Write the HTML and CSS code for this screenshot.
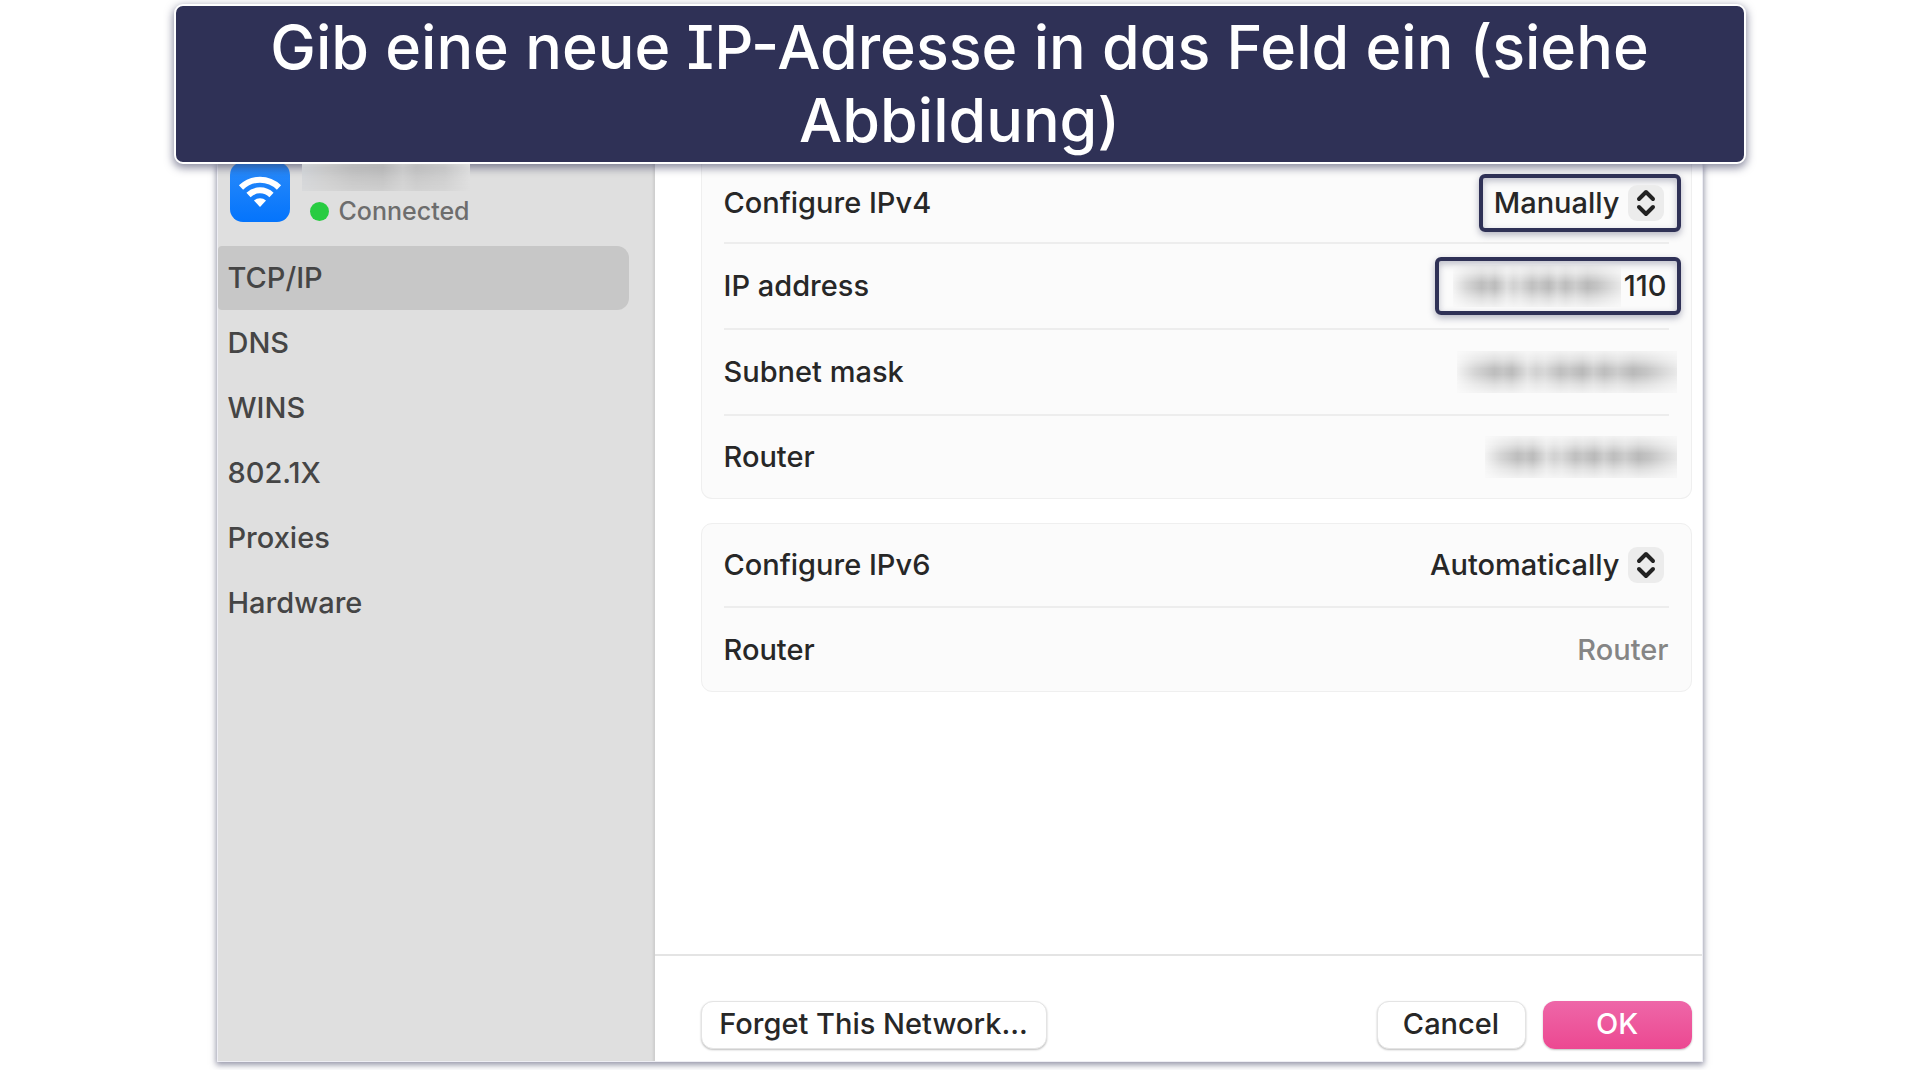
FILE: index.html
```html
<!DOCTYPE html>
<html lang="de">
<head>
  <meta charset="UTF-8">
  <meta name="viewport" content="width=device-width, initial-scale=1">
  <title>IP-Adresse</title>
  <link rel="stylesheet" href="styles.css">
</head>
<body>
  <h1 class="banner">Gib eine neue IP-Adresse in das Feld ein (siehe Abbildung)</h1>

  <div class="window" lang="en">
    <aside class="sidebar">
      <div class="network">
        <svg class="wifi" viewBox="0 0 60 60" aria-hidden="true">
          <defs>
            <linearGradient id="blue" x1="0" y1="0" x2="0" y2="1">
              <stop offset="0" stop-color="#2a8bfa"/>
              <stop offset="1" stop-color="#0474fc"/>
            </linearGradient>
          </defs>
          <rect width="60" height="60" rx="13" fill="url(#blue)"/>
          <g fill="none" stroke="#fff" stroke-width="6">
            <path d="M11 25.500a27 27 0 0 1 38 0"/>
            <path d="M18.500 33a16.500 16.500 0 0 1 23 0"/>
          </g>
          <path d="M24 38.500a9 9 0 0 1 12 0L30 45z" fill="#fff"/>
        </svg>
        <div>
          <div class="redacted name"></div>
          <div class="status"><span class="dot"></span>Connected</div>
        </div>
      </div>
      <nav>
        <a href="#tcpip" class="active">TCP/IP</a>
        <a href="#dns">DNS</a>
        <a href="#wins">WINS</a>
        <a href="#8021x">802.1X</a>
        <a href="#proxies">Proxies</a>
        <a href="#hardware">Hardware</a>
      </nav>
    </aside>

    <form class="main">
      <section class="group first">
        <div class="row">
          <label for="ipv4">Configure IPv4</label>
          <div class="dropdown marked">
            <select id="ipv4"><option>Manually</option></select>
            <svg class="chevrons" viewBox="0 0 36 36" aria-hidden="true">
              <path d="M11 14l7-7 7 7M11 22l7 7 7-7"/>
            </svg>
          </div>
        </div>
        <div class="row">
          <label for="ip">IP address</label>
          <div class="address marked">
            <span class="redacted ip"></span>
            <input id="ip" type="text" value="110">
          </div>
        </div>
        <div class="row">
          <span>Subnet mask</span>
          <span class="redacted mask"></span>
        </div>
        <div class="row">
          <span>Router</span>
          <span class="redacted router"></span>
        </div>
      </section>

      <section class="group">
        <div class="row">
          <label for="ipv6">Configure IPv6</label>
          <div class="dropdown">
            <select id="ipv6"><option>Automatically</option></select>
            <svg class="chevrons" viewBox="0 0 36 36" aria-hidden="true">
              <path d="M11 14l7-7 7 7M11 22l7 7 7-7"/>
            </svg>
          </div>
        </div>
        <div class="row">
          <label for="router6">Router</label>
          <input id="router6" type="text" placeholder="Router">
        </div>
      </section>

      <footer>
        <button type="button" class="forget">Forget This Network...</button>
        <button type="button">Cancel</button>
        <button type="submit" class="ok">OK</button>
      </footer>
    </form>
  </div>
</body>
</html>
```
FILE: styles.css
```css
* { box-sizing: border-box; }
body {
  display: flex;
  flex-direction: column;
  align-items: center;
  min-height: 100vh;
  margin: 0;
  padding: 4px 0 8px;
  background: #fff;
  color: #272727;
  font: 500 29px/36px Inter, "Liberation Sans", sans-serif;
}

.banner {
  position: relative;
  width: 96%;
  max-width: 1572px;
  margin: 0;
  padding: 5px 60px;
  border: 2px solid #fff;
  border-radius: 9px;
  background: #2f3156;
  box-shadow: 0 3px 8px 1px rgba(47, 49, 86, 0.55);
  color: #fff;
  font-size: 61px;
  font-weight: 500;
  line-height: 73px;
  text-align: center;
  font-feature-settings: "cv08", "cv11";
}

.window {
  display: flex;
  flex: 1;
  width: 92%;
  max-width: 1486px;
  border: 1px solid #eeeef4;
  border-top: 0;
  box-shadow: 0 2px 6px 1px rgba(47, 49, 86, 0.5);
}

/* sidebar */
.sidebar {
  width: 437px;
  flex-shrink: 0;
  background: #dfdfdf;
  box-shadow: inset -3px 0 2px -1px #cecece;
}
.network { display: flex; height: 82px; padding-left: 12px; }
.wifi { width: 60px; height: 60px; margin: -2px 12px 0 0; }
.status { display: flex; align-items: center; gap: 10px; margin: 2px 0 0 8px; color: #6d6d6d; font-size: 25px; }
.dot { width: 19px; height: 19px; border-radius: 50%; background: #28cc41; }
nav a { display: block; width: 411px; height: 64px; margin-bottom: 1px; padding-left: 10px; border-radius: 4px 12px 12px 4px; color: #454545; line-height: 64px; text-decoration: none; }
nav .active { background: #c7c7c7; }

/* settings */
.main { display: flex; flex: 1; flex-direction: column; min-width: 0; }
.group { margin: 0 10px 24px 46px; padding: 0 22px; border: 1px solid #efefef; border-radius: 11px; background: #fbfbfb; }
.group.first { border-top: 0; border-radius: 0 0 11px 11px; }
.row { display: flex; align-items: center; justify-content: space-between; height: 84px; border-bottom: 2px solid #ededed; }
.row:last-child { height: 83px; border: 0; }
.first .row { height: 86px; }
.first .row:first-child { height: 80px; }
.first .row:last-child { height: 82px; }
select, input { min-width: 0; padding: 0; border: 0; outline: 0; background: transparent; color: inherit; font: inherit; text-align: right; }
input::placeholder { color: #858585; opacity: 1; }
select { flex: 1; appearance: none; text-align-last: right; }
.dropdown { display: flex; align-items: center; gap: 8px; width: 260px; padding-right: 5px; }
.chevrons { width: 36px; height: 36px; border-radius: 9px; background: #ececec; fill: none; stroke: #222; stroke-width: 4; stroke-linecap: round; stroke-linejoin: round; }
.marked {
  height: 58px;
  margin-right: -12px;
  border: 4px solid #2f3156;
  border-radius: 6px;
  box-shadow: 0 3px 7px rgba(47, 49, 86, 0.35), inset 0 3px 7px rgba(47, 49, 86, 0.3);
}
.dropdown.marked { width: 202px; padding-right: 13px; }
.address { display: flex; align-items: center; width: 246px; padding: 0 10px 0 14px; }
.address input { flex: 1; }

/* blanked out values */
.redacted {
  height: 42px;
  background: linear-gradient(90deg, #f3f3f3, #d6d6d6 8%, #bebebe 17%, #c6c6c6 21%, #bcbcbc 25%, #dedede 32%, #d2d2d2 36%, #d8d8d8 40%, #c0c0c0 47%, #c8c8c8 51%, #bababa 57%, #cecece 62%, #bebebe 67%, #cdcdcd 73%, #bababa 80%, #c5c5c5 86%, #d2d2d2 91%, #e9e9e9);
  mask-image: linear-gradient(rgba(0, 0, 0, 0.15), rgba(0, 0, 0, 0.45) 20%, #000 42%, #000 56%, rgba(0, 0, 0, 0.45) 80%, rgba(0, 0, 0, 0.15));
}
.name { width: 168px; height: 27px; background: linear-gradient(90deg, #cfd2d6, #c8c8c8 15%, #bcbcbc 30%, #b8b8b8 48%, #cacaca 60%, #c0c0c0 68%, #c8c8c8 85%, #dfdfdf); mask-image: linear-gradient(#000, rgba(0, 0, 0, 0.4)); }
.ip { width: 168px; }
.mask { width: 220px; margin-right: -8px; }
.router { width: 192px; margin-right: -8px; }

footer { display: flex; gap: 17px; margin-top: auto; padding: 45px 10px 12px 46px; border-top: 2px solid #e4e4e4; }
button {
  width: 149px;
  height: 48px;
  padding: 0 0 2px;
  border: 1px solid #e4e4e4;
  border-radius: 12px;
  background: #fff;
  box-shadow: 0 1px 2px rgba(0, 0, 0, 0.25);
  color: #272727;
  font: inherit;
}
.forget { width: 346px; margin-right: auto; }
.ok { border: 0; background: linear-gradient(#ee67a8, #ec4891); color: #fff; }
```
